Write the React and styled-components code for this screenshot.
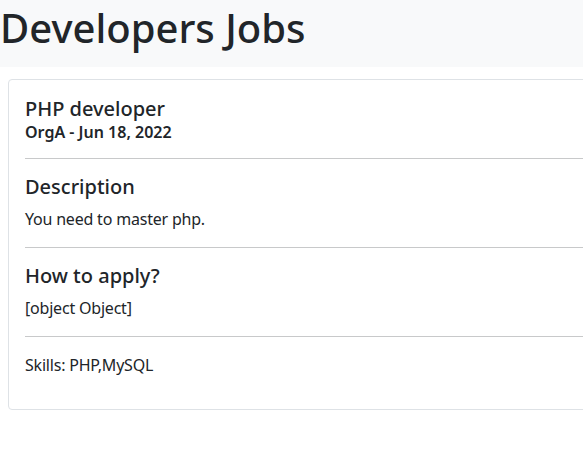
import React from "react";
import styled, { createGlobalStyle } from "styled-components";

const Global = createGlobalStyle`
  html, body { margin: 0; padding: 0; background: #fff; overflow: hidden; }
  body {
    font-family: "Noto Sans", "Open Sans", "DejaVu Sans", sans-serif;
    color: #212529;
    font-size: 16px;
    line-height: 1.5;
  }
  * { box-sizing: border-box; }
`;

const Header = styled.header`
  background: #f8f9fa;
  padding: 4px 0 15px 0;
`;

const PageTitle = styled.h1`
  margin: 0;
  font-size: 40px;
  line-height: 48px;
  font-weight: 500;
`;

const Card = styled.article`
  margin: 12px 0 0 8px;
  width: 700px;
  border: 1px solid #dee2e6;
  border-radius: 4px;
  background: #fff;
`;

const CardBody = styled.div`
  padding: 16px;
`;

const Title = styled.h5`
  margin: 1px 0 0 0;
  font-size: 20px;
  line-height: 24px;
  font-weight: 500;
`;

const Subtitle = styled.h6`
  margin: 2px 0 3px 0;
  font-size: 16px;
  line-height: 19px;
  font-weight: 600;
`;

const Rule = styled.hr`
  margin: 16px 0;
  border: 0;
  border-top: 1px solid #c8c9ca;
`;

const SectionTitle = styled.h5`
  margin: 1px 0 8px 0;
  font-size: 20px;
  line-height: 24px;
  font-weight: 500;
`;

const Text = styled.p`
  margin: 0 0 16px 0;
  font-size: 16px;
  line-height: 24px;
  letter-spacing: -0.2px;
`;

export default function App() {
  return (
    <>
      <Global />
      <Header>
        <PageTitle>Developers Jobs</PageTitle>
      </Header>
      <Card>
        <CardBody>
          <Title>PHP developer</Title>
          <Subtitle>OrgA - Jun 18, 2022</Subtitle>
          <Rule />
          <SectionTitle>Description</SectionTitle>
          <Text>You need to master php.</Text>
          <Rule />
          <SectionTitle>How to apply?</SectionTitle>
          <Text>[object Object]</Text>
          <Rule />
          <Text>Skills: PHP,MySQL</Text>
        </CardBody>
      </Card>
    </>
  );
}
